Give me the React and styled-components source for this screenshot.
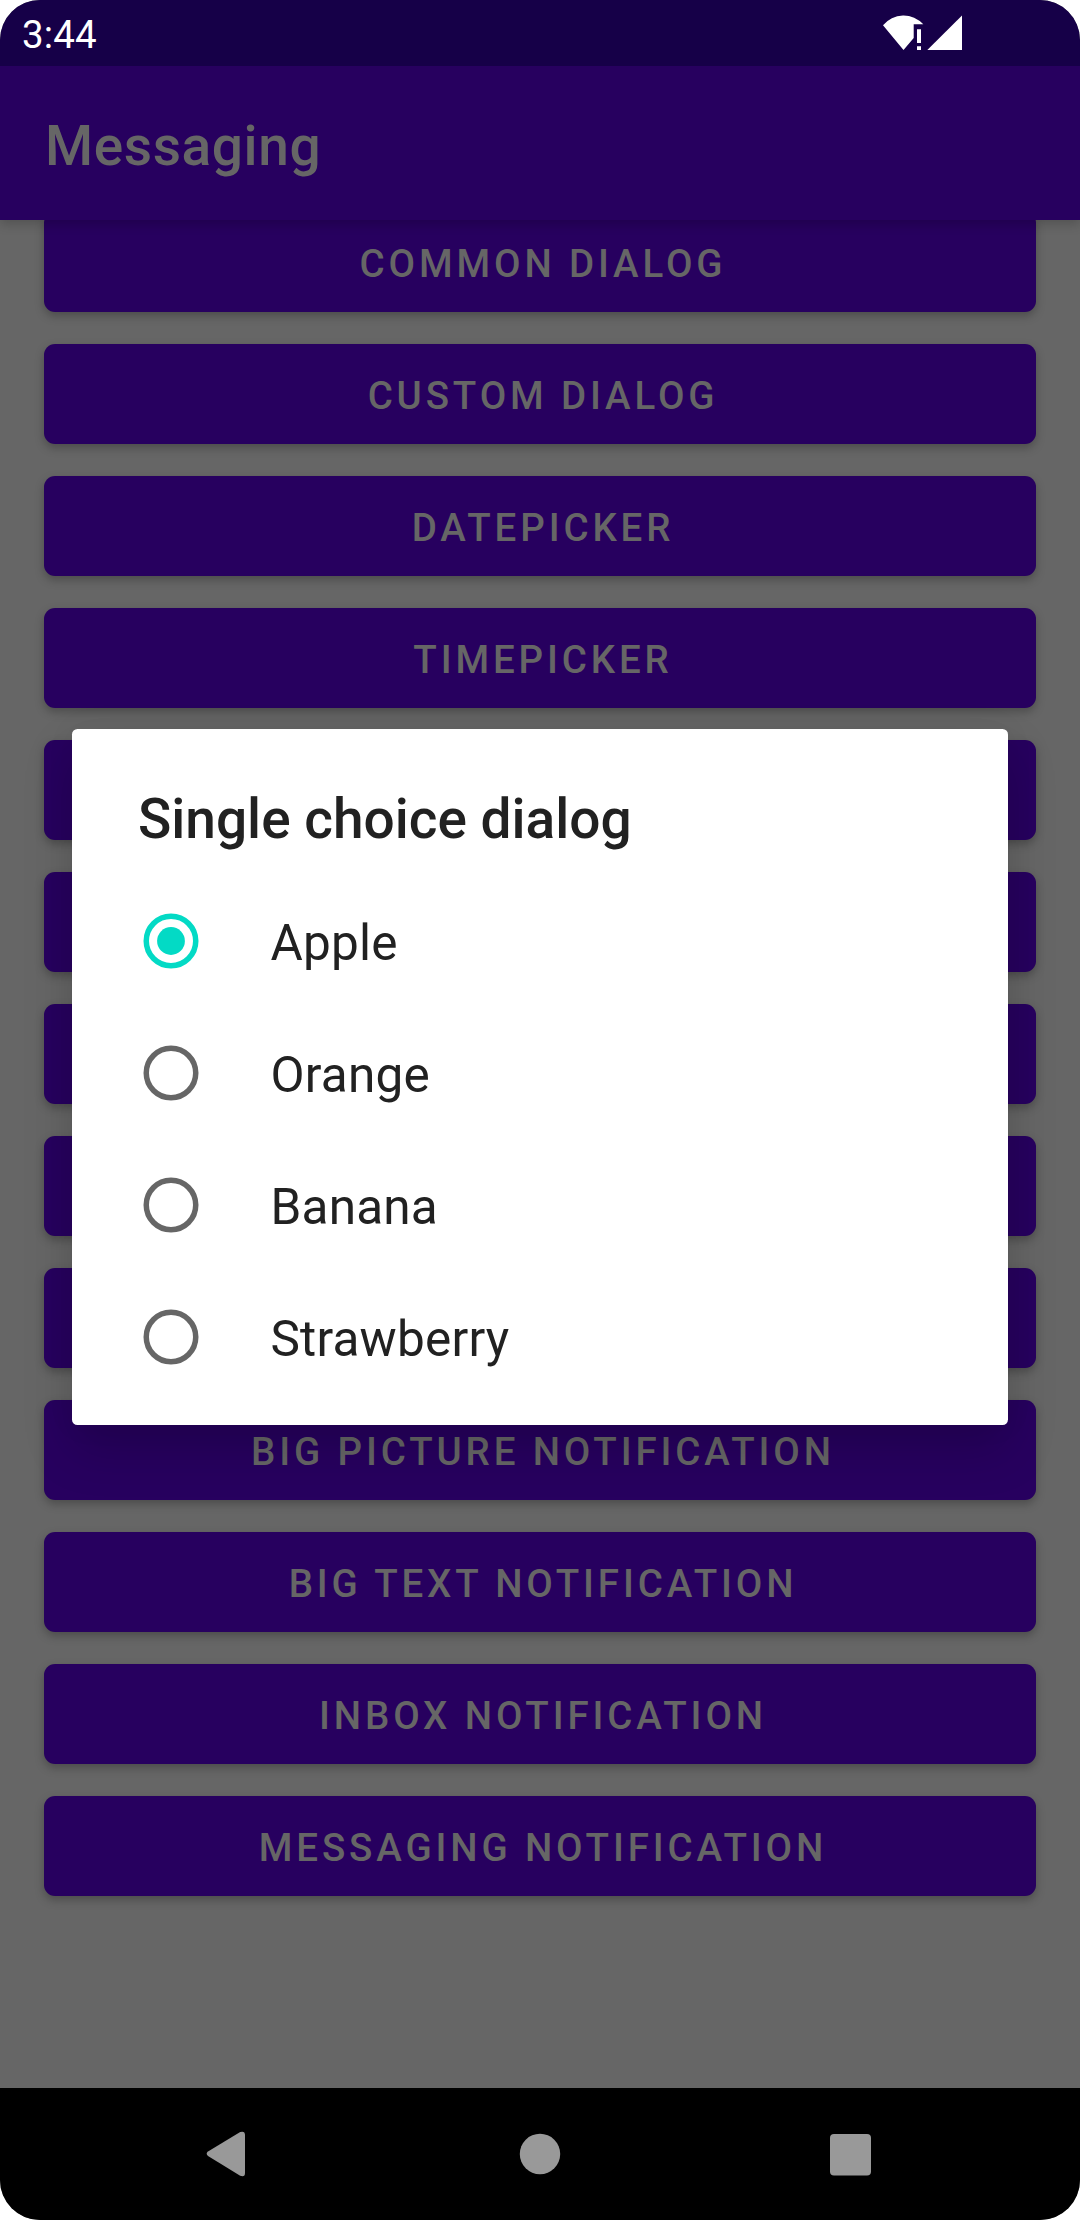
import React from "react";
import styled, { createGlobalStyle } from "styled-components";

const GlobalStyle = createGlobalStyle`
  * { box-sizing: border-box; }
  body { margin: 0; background: #fff; font-family: Roboto, "Liberation Sans", sans-serif; }
`;

const Screen = styled.div`
  position: relative;
  display: flex;
  flex-direction: column;
  width: 1080px;
  height: 2220px;
  overflow: hidden;
  border-radius: 40px;
  background: #666;
`;

const StatusBar = styled.header`
  display: flex;
  flex: none;
  align-items: center;
  justify-content: space-between;
  height: 66px;
  padding: 0 117px 0 22px;
  background: #160048;
  z-index: 2;
`;

const Clock = styled.span`
  color: #fff;
  font-size: 38.5px;
  line-height: 46px;
  padding-top: 3px;
  letter-spacing: 0.1px;
`;

const StatusIcons = styled.svg`
  display: block;
  width: 80px;
  height: 36px;
  fill: #fff;
`;

const AppBar = styled.div`
  display: flex;
  flex: none;
  align-items: center;
  height: 154px;
  padding: 6px 44px 0 45px;
  background: #27005f;
  box-shadow: 0 4px 11px rgba(0, 0, 0, 0.2);
  z-index: 1;
`;

const AppTitle = styled.h1`
  margin: 0;
  color: #666;
  font-size: 55px;
  font-weight: 500;
  line-height: 64px;
  letter-spacing: 0.6px;
`;

const Content = styled.main`
  display: flex;
  flex: 1;
  flex-direction: column;
  justify-content: flex-end;
  gap: 32px;
  min-height: 0;
  padding: 0 44px 192px;
  overflow: hidden;
`;

const ActionButton = styled.button`
  display: flex;
  flex: none;
  align-items: center;
  justify-content: center;
  height: 100px;
  padding: 3px 0 0 6px;
  border: 0;
  border-radius: 11px;
  background: #27005f;
  box-shadow: 0 4px 10px rgba(0, 0, 0, 0.26);
  color: #666;
  font-family: inherit;
  font-size: 38.5px;
  font-weight: 500;
  letter-spacing: 3.86px;
  text-transform: uppercase;
`;

const NavBar = styled.nav`
  display: flex;
  flex: none;
  align-items: center;
  justify-content: space-between;
  height: 132px;
  padding: 0 197px;
  background: #000;
`;

const NavIcon = styled.svg`
  display: block;
  width: 66px;
  height: 66px;
  fill: #999;
`;

const DialogLayer = styled.div`
  position: absolute;
  inset: 0;
  z-index: 3;
  display: flex;
  flex-direction: column;
  align-items: center;
  padding-top: 729px;
`;

const Dialog = styled.section`
  width: 936px;
  height: 696px;
  padding-bottom: 22px;
  border-radius: 5.5px;
  background: #fff;
  color: #212121;
  box-shadow: 0 24px 50px rgba(0, 0, 0, 0.17), 0 0 30px rgba(0, 0, 0, 0.05);
`;

const DialogTitle = styled.h2`
  height: 146px;
  margin: 0;
  padding: 58px 66px 0;
  font-size: 55px;
  font-weight: 500;
  line-height: 64px;
`;

const Choice = styled.div`
  display: flex;
  align-items: center;
  gap: 71.5px;
  height: 132px;
  padding-left: 71px;
`;

const RadioIcon = styled.svg`
  display: block;
  flex: none;
  width: 56px;
  height: 56px;
  color: ${(p) => (p.$checked ? "#03dac5" : "#666")};
`;

const ChoiceLabel = styled.span`
  padding-top: 3px;
  font-size: 49.5px;
  line-height: 58px;
  letter-spacing: 0.2px;
`;

const actions = [
  "Common dialog",
  "Custom dialog",
  "Datepicker",
  "Timepicker",
  null,
  null,
  null,
  null,
  null,
  "Big picture notification",
  "Big text notification",
  "Inbox notification",
  "Messaging notification",
];

const fruits = ["Apple", "Orange", "Banana", "Strawberry"];

function Radio({ checked }) {
  return (
    <RadioIcon viewBox="0 0 56 56" $checked={checked}>
      <circle cx="28" cy="28" r="24.75" fill="none" stroke="currentColor" strokeWidth="5.5" />
      {checked && <circle cx="28" cy="28" r="13.9" fill="currentColor" />}
    </RadioIcon>
  );
}

export default function App() {
  return (
    <>
      <GlobalStyle />
      <Screen>
        <StatusBar>
          <Clock>3:44</Clock>
          <StatusIcons viewBox="0 0 80 36">
            <path d="M0 10.3A26.4 26.4 0 0 1 40.3 9.3H30.7V23L20.5 35Z" />
            <path d="M34 14.3h4v13.7h-4zM34 31.2h4v3.8h-4z" />
            <path d="M44.3 35L79 .5V35Z" />
          </StatusIcons>
        </StatusBar>
        <AppBar>
          <AppTitle>Messaging</AppTitle>
        </AppBar>
        <Content>
          {actions.map((label, i) => (
            <ActionButton key={i}>{label}</ActionButton>
          ))}
        </Content>
        <NavBar>
          <NavIcon viewBox="0 0 66 66">
            <path d="M11 30.6Q8.3 32.8 11 35L43.2 54.8Q48 56.5 48 52V14Q48 9.5 43.2 11Z" />
          </NavIcon>
          <NavIcon viewBox="0 0 66 66">
            <circle cx="33" cy="33" r="20.2" />
          </NavIcon>
          <NavIcon viewBox="0 0 66 66">
            <rect x="13" y="13" width="41" height="41.5" rx="4" />
          </NavIcon>
        </NavBar>
        <DialogLayer>
          <Dialog role="dialog">
            <DialogTitle>Single choice dialog</DialogTitle>
            {fruits.map((fruit, i) => (
              <Choice key={fruit}>
                <Radio checked={i === 0} />
                <ChoiceLabel>{fruit}</ChoiceLabel>
              </Choice>
            ))}
          </Dialog>
        </DialogLayer>
      </Screen>
    </>
  );
}
